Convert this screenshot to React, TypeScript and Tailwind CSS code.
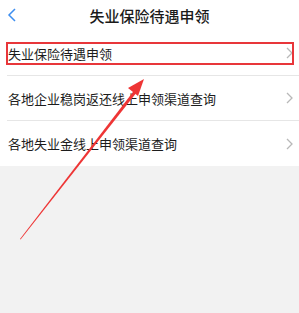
import React from "react";

const font = { fontFamily: '"Noto Sans CJK SC", "Noto Sans", sans-serif' };

function Chevron() {
  return (
    <svg width="7" height="12" viewBox="0 0 7 12" className="shrink-0">
      <path d="M1 1 L6 6 L1 11" fill="none" stroke="#b8b8b8" strokeWidth="1.3" />
    </svg>
  );
}

function Row({ text, last }: { text: string; last?: boolean }) {
  return (
    <div className="pl-[7px]">
      <div
        className={`flex h-[45px] items-center justify-between pl-px pr-[6px] ${
          last ? "" : "border-b border-[#e6e6e6]"
        }`}
      >
        <span className="text-[13px] leading-none text-[#1c1c1c]">{text}</span>
        <Chevron />
      </div>
    </div>
  );
}

export default function App() {
  return (
    <div className="relative h-[313px] w-[299px] overflow-hidden bg-[#f2f2f2]" style={font}>
      <div className="bg-white">
        <div className="relative flex h-[31px] items-center justify-center">
          <svg width="10" height="14" viewBox="0 0 10 14" className="absolute left-[7px] top-[8px]">
            <path d="M8 1 L2 7 L8 13" fill="none" stroke="#3d8ef0" strokeWidth="1.5" />
          </svg>
          <span className="text-[15px] font-medium leading-none text-[#1a1a1a]">失业保险待遇申领</span>
        </div>
        <Row text="失业保险待遇申领" />
        <Row text="各地企业稳岗返还线上申领渠道查询" />
        <Row text="各地失业金线上申领渠道查询" last />
      </div>
      <div className="pointer-events-none absolute left-[6px] top-[42px] h-[23px] w-[288px] border-2 border-[#e8363a]" />
      <svg className="pointer-events-none absolute left-0 top-0" width="299" height="313" viewBox="0 0 299 313">
        <polygon points="20,239 134.5,90 137,92 20.6,239.4" fill="#ee3535" />
        <polygon points="144,79 138,96 128,88" fill="#ee3535" />
      </svg>
    </div>
  );
}
